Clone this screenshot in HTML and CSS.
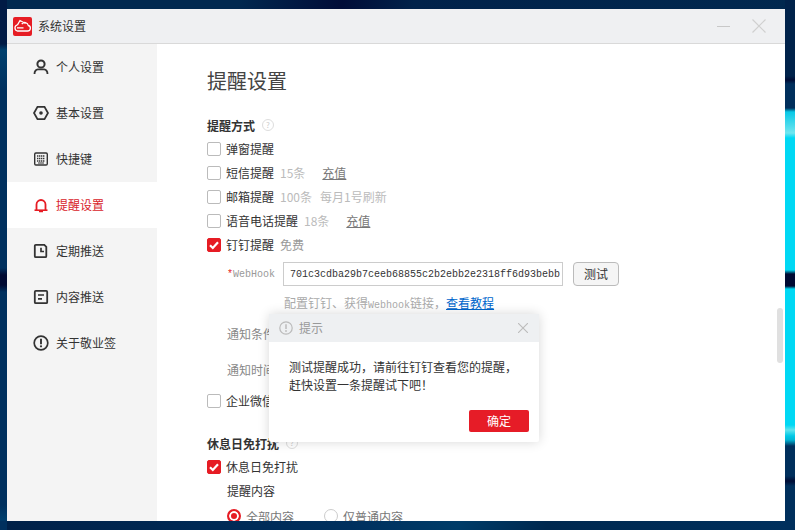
FILE: index.html
```html
<!DOCTYPE html>
<html lang="zh">
<head>
<meta charset="utf-8">
<title>系统设置</title>
<link rel="stylesheet" href="styles.css">
</head>
<body>
<div class="window">
  <header class="titlebar">
    <svg class="logo" viewBox="0 0 19 19"><rect width="19" height="19" rx="2" fill="#e61c24"/><path d="M4.500 7.800 7 3.500l5.500 3M4.500 7.800a3.200 3.200 0 0 0-.2 6.200h10.200a2.800 2.800 0 0 0 .8-5.500 3.600 3.600 0 0 0-6.500-1.400M4 10.800h6.500" fill="none" stroke="#fff" stroke-width="1.300"/></svg>
    <span class="app-name">系统设置</span>
    <span class="spacer"></span>
    <span class="win-min"></span>
    <svg class="win-close" viewBox="0 0 14 14"><path d="M.5.5l13 13M13.500.5l-13 13" stroke="#d0d0d0" stroke-width="1.200"/></svg>
  </header>
  <div class="body">
    <nav class="sidebar">
      <a class="nav-item"><svg class="nav-icon" viewBox="0 0 16 16"><circle cx="8" cy="5" r="3.600" fill="none" stroke="#333" stroke-width="2"/><path d="M1.500 15c0-3 2-4.500 3.500-4.700h6c1.500.2 3.500 1.700 3.500 4.700" fill="none" stroke="#333" stroke-width="1.800"/></svg>个人设置</a>
      <a class="nav-item"><svg class="nav-icon" viewBox="0 0 16 16"><path d="M4.500 1.800h7L15 8l-3.500 6.200h-7L1 8z" fill="none" stroke="#333" stroke-width="1.800"/><circle cx="8" cy="8" r="1.800" fill="#333"/></svg>基本设置</a>
      <a class="nav-item"><svg class="nav-icon" viewBox="0 0 16 16"><rect x="1.700" y="2" width="12.600" height="12" rx="1.200" fill="none" stroke="#333" stroke-width="1.400"/><path d="M4 5h8M4 7.500h8M4 10h8" stroke="#333" stroke-width="1.300" stroke-dasharray="1.400 .6"/><path d="M5 12h6" stroke="#333"/></svg>快捷键</a>
      <a class="nav-item active"><svg class="nav-icon" viewBox="0 0 16 16"><path d="M3.500 13V7.500a4.500 4.500 0 0 1 9 0V13" fill="none" stroke="#e61c24" stroke-width="1.800"/><path d="M1.500 13.200h13" stroke="#e61c24" stroke-width="1.600"/><path d="M6 14.500h4" stroke="#e61c24" stroke-width="1.500"/></svg>提醒设置</a>
      <a class="nav-item"><svg class="nav-icon" viewBox="0 0 16 16"><path d="M2.800 1.900h8.500l2 2v9.300a1 1 0 0 1-1 1H2.800a1 1 0 0 1-1-1V2.900a1 1 0 0 1 1-1z" fill="none" stroke="#333" stroke-width="1.800"/><path d="M8 4.800V8.500h3" fill="none" stroke="#333" stroke-width="1.700"/></svg>定期推送</a>
      <a class="nav-item"><svg class="nav-icon" viewBox="0 0 16 16"><rect x="1.800" y="1.900" width="12.400" height="12.300" rx="1" fill="none" stroke="#333" stroke-width="1.800"/><path d="M5 6h6M5 9.800h4" stroke="#333" stroke-width="1.700"/></svg>内容推送</a>
      <a class="nav-item"><svg class="nav-icon" viewBox="0 0 16 16"><circle cx="8" cy="8" r="6.800" fill="none" stroke="#333" stroke-width="1.700"/><path d="M8 3.800v5.400" stroke="#333" stroke-width="1.900"/><circle cx="8" cy="11.300" r="1.100" fill="#333"/></svg>关于敬业签</a>
    </nav>
    <main class="content">
      <h1 class="page-title">提醒设置</h1>
      <div class="heading">提醒方式<span class="help">?</span></div>
      <label class="row"><span class="check"></span>弹窗提醒</label>
      <label class="row"><span class="check"></span>短信提醒<span class="count">15条</span><a class="recharge">充值</a></label>
      <label class="row"><span class="check"></span>邮箱提醒<span class="count">100条</span><span class="count refresh">每月1号刷新</span></label>
      <label class="row"><span class="check"></span>语音电话提醒<span class="count">18条</span><a class="recharge">充值</a></label>
      <label class="row"><span class="check on"><svg viewBox="0 0 14 14"><path d="M3 7.300l2.800 2.700L11 4.200" fill="none" stroke="#fff" stroke-width="2.200"/></svg></span>钉钉提醒<span class="free">免费</span></label>
      <div class="hook">
        <span class="hook-label"><span class="star">*</span>WebHook</span>
        <input class="hook-input" type="text" value="701c3cdba29b7ceeb68855c2b2ebb2e2318ff6d93bebb" readonly>
        <button class="hook-test">测试</button>
      </div>
      <div class="hint">配置钉钉、获得<span class="mono">Webhook</span>链接，<a class="link">查看教程</a></div>
      <div class="sub cond">通知条件</div>
      <div class="sub time">通知时间</div>
      <label class="row wecom"><span class="check"></span>企业微信提醒</label>
      <div class="heading rest">休息日免打扰<span class="help">?</span></div>
      <label class="row"><span class="check on"><svg viewBox="0 0 14 14"><path d="M3 7.300l2.800 2.700L11 4.200" fill="none" stroke="#fff" stroke-width="2.200"/></svg></span>休息日免打扰</label>
      <div class="plain">提醒内容</div>
      <div class="radios">
        <span class="radio-item"><span class="radio on"></span>全部内容</span>
        <span class="radio-item"><span class="radio"></span>仅普通内容</span>
      </div>
    </main>
  </div>
  <span class="scroll-thumb"></span>
  <section class="dialog">
    <header class="dialog-head">
      <svg class="dialog-icon" viewBox="0 0 14 14"><circle cx="7" cy="7" r="6.200" fill="none" stroke="#bbb" stroke-width="1.200"/><path d="M7 3.300v4.600" stroke="#bbb" stroke-width="1.500"/><circle cx="7" cy="10" r=".9" fill="#bbb"/></svg>
      <span class="dialog-title">提示</span>
      <svg class="dialog-close" viewBox="0 0 10 10"><path d="M0 0l10 10M10 0L0 10" stroke="#bbb" stroke-width="1.100"/></svg>
    </header>
    <p class="dialog-text">测试提醒成功，请前往钉钉查看您的提醒，<br>赶快设置一条提醒试下吧！</p>
    <div class="dialog-foot"><button class="dialog-ok">确定</button></div>
  </section>
</div>
</body>
</html>
```
FILE: styles.css
```css
* { box-sizing: border-box; }
html, body { height: 100%; }
body {
  margin: 0;
  padding: 9px 10px 9px 7px;
  overflow: hidden;
  font-family: "Noto Sans CJK SC", "Liberation Sans", sans-serif;
  font-size: 12px;
  color: #333;
  background:
    linear-gradient(to bottom, #00224a 0, #00224a 76px, #000c35 80px, #002f5c 84px, #002f5c 108px, #08c8e6 112px, #70e6f0 133px, #00d8f4 138px, #00d8f4 270px, #000a32 274px, #000a32 286px, #00d8f4 289px, #00d8f4 425px, #60e4ee 430px, #00c8e6 436px, #00b4d4 440px, #002f5c 446px, #002f5c 476px, #000c35 481px, #002f5c 486px, #002f5c 100%) right top / 10px 100% no-repeat,
    linear-gradient(to bottom, #001a45 0, #001a45 44px, #00406e 50px, #00305e 90px, #00305e 268px, #000a32 275px, #000a32 285px, #00305e 292px, #00305e 505px, #00406e 520px, #00305e 521px) left top / 7px 100% no-repeat,
    linear-gradient(100deg, #00284f 0, #00284f 30%, #000c38 43%, #00224a 52%, #00284f 100%) left top / 100% 9px no-repeat,
    linear-gradient(100deg, #001c42 0, #00305e 50%, #003c68 62%, #00284f 72%, #00305e 100%);
}
.window {
  position: relative;
  width: 778px;
  height: 512px;
  background: #fff;
  overflow: hidden;
  display: flex;
  flex-direction: column;
}
.titlebar {
  flex: none;
  height: 35px;
  padding-left: 6px;
  display: flex;
  align-items: center;
  background: #eff0f2;
  border-bottom: 1px solid #d9d9d9;
}
.logo { width: 19px; height: 19px; margin-right: 6px; }
.app-name { font-size: 12px; color: #333; padding-bottom: 2px; }
.spacer { flex: 1; }
.win-min { width: 13px; height: 1px; background: #c8c8c8; margin-right: 22px; }
.win-close { width: 14px; height: 14px; margin-right: 19px; }
.body { flex: 1; display: flex; min-height: 0; }
.sidebar { flex: none; width: 150px; background: #f4f4f4; }
.nav-item {
  height: 46px;
  padding: 0 0 2px 26px;
  display: flex;
  align-items: center;
  gap: 7px;
  color: #333;
}
.nav-item.active { background: #fff; color: #d8232a; }
.nav-icon { width: 16px; height: 16px; flex: none; margin-top: 2px; }
.content { flex: 1; padding: 23px 0 0 50px; overflow: hidden; }
.page-title { margin: 0 0 18px; height: 28px; font-size: 20px; font-weight: 400; line-height: 28px; color: #444; }
.heading { height: 24px; display: flex; align-items: center; font-weight: 700; color: #333; }
.heading.rest { margin-top: 18px; }
.help {
  width: 12px;
  height: 12px;
  margin-left: 7px;
  border: 1px solid #ddd;
  border-radius: 50%;
  font-size: 8px;
  font-weight: 400;
  line-height: 10px;
  text-align: center;
  color: #ccc;
}
.row { height: 24px; padding-bottom: 2px; display: flex; align-items: center; color: #333; }
.check {
  flex: none;
  width: 14px;
  height: 14px;
  margin: 2px 5px 0 0;
  background: #fff;
  border: 1px solid #bbb;
  border-radius: 2px;
}
.check.on { background: #e61c24; border-color: #e61c24; }
.check svg { display: block; width: 14px; height: 14px; margin: -1px; }
.count { margin-left: 6px; color: #bbb; }
.count.refresh { margin-left: 8px; }
.recharge { margin-left: 17px; color: #777; text-decoration: underline; }
.free { margin-left: 6px; color: #999; }
.hook { margin-top: 5px; height: 24px; display: flex; align-items: center; }
.hook-label {
  width: 68px;
  margin-right: 8px;
  font-family: "Liberation Mono", monospace;
  font-size: 10px;
  text-align: right;
  color: #999;
}
.star { color: #e61c24; }
.hook-input {
  width: 280px;
  height: 24px;
  padding: 0 0 0 6px;
  border: 1px solid #ccc;
  outline: 0;
  font-family: "Liberation Mono", monospace;
  font-size: 10px;
  color: #333;
  background: #fff;
}
.hook-test {
  width: 46px;
  height: 24px;
  margin-left: 10px;
  padding: 0 0 2px;
  background: #f5f5f5;
  border: 1px solid #bbb;
  border-radius: 4px;
  font-family: inherit;
  font-size: 12px;
  color: #333;
}
.hint { margin: 6px 0 0 77px; height: 22px; line-height: 22px; color: #aaa; }
.mono { font-family: "Liberation Mono", monospace; font-size: 10px; }
.link { color: #0066cc; text-decoration: underline; }
.sub { margin-left: 20px; height: 24px; line-height: 24px; color: #888; }
.sub.cond { margin-top: 8px; }
.sub.time { margin-top: 12px; }
.row.wecom { margin-top: 7px; }
.plain { margin-left: 20px; height: 24px; line-height: 24px; color: #333; }
.radios { margin: 1px 0 0 20px; height: 24px; display: flex; align-items: center; color: #777; }
.radio-item { width: 97px; display: flex; align-items: center; gap: 5px; }
.radio {
  flex: none;
  width: 14px;
  height: 14px;
  border: 1px solid #ccc;
  border-radius: 50%;
  background: #fff;
}
.radio.on { border: 2px solid #e61c24; box-shadow: inset 0 0 0 2px #fff; background: #e61c24; }
.scroll-thumb {
  position: absolute;
  right: 2px;
  top: 299px;
  width: 6px;
  height: 55px;
  border-radius: 3px;
  background: #e0e0e0;
}
.dialog {
  position: absolute;
  left: 262px;
  top: 305px;
  width: 270px;
  height: 128px;
  background: #fff;
  border-radius: 2px;
  box-shadow: 0 0 12px rgba(0, 0, 0, .16);
}
.dialog-head {
  height: 28px;
  padding: 0 11px 0 10px;
  display: flex;
  align-items: center;
  background: #eef0f2;
}
.dialog-icon { width: 14px; height: 14px; margin-right: 6px; }
.dialog-title { flex: 1; color: #999; font-size: 12px; padding-bottom: 2px; }
.dialog-close { width: 10px; height: 10px; margin-left: auto; }
.dialog-text { margin: 16px 0 0 20px; line-height: 18px; color: #333; white-space: nowrap; }
.dialog-foot { margin-top: 16px; padding-right: 10px; display: flex; justify-content: flex-end; }
.dialog-ok {
  width: 60px;
  height: 22px;
  padding: 0 0 2px;
  border: 0;
  border-radius: 2px;
  background: #e61c27;
  color: #fff;
  font-family: inherit;
  font-size: 12px;
}
```
